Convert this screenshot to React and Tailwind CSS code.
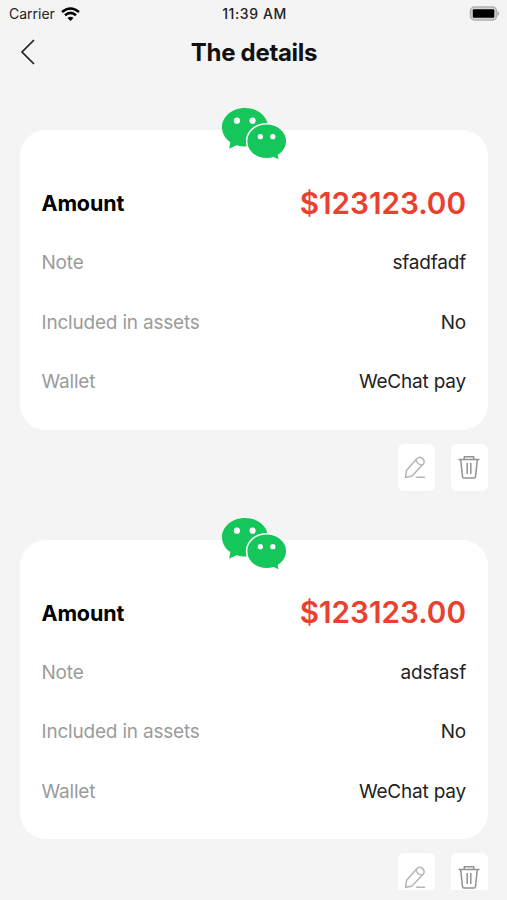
import React from 'react';

function WeChatLogo() {
  return (
    <svg className="absolute left-[200.500px] top-[-23px] h-[54px] w-[67px]" viewBox="0 0 67 54">
      <g fill="#15c75b">
        <path d="M24 1C11.300 1 1 9.500 1 20.200C1 26.200 4.200 31.500 9.300 35.100L8.200 41.700L15.500 38.200C18.200 39 21 39.400 24 39.400C36.700 39.400 47 30.900 47 20.200C47 9.500 36.700 1 24 1Z" />
        <path d="M45.700 16.800C34.300 16.800 25.600 24.600 25.600 34.300C25.600 44.200 34.500 51.700 45.700 51.700C48.200 51.700 50.500 51.400 52.700 50.700L58.600 53.600L57.400 48.300C62.500 45 65.800 40 65.800 34.300C65.800 24.600 57 16.800 45.700 16.800Z" stroke="#ffffff" strokeWidth="1.500" />
      </g>
      <g fill="#ffffff">
        <circle cx="15.900" cy="13.700" r="3.100" />
        <circle cx="31.600" cy="13.700" r="3.100" />
        <circle cx="39.300" cy="29.700" r="2.600" />
        <circle cx="51.800" cy="29.700" r="2.600" />
      </g>
    </svg>
  );
}

function PencilIcon() {
  return (
    <svg className="h-6 w-6" viewBox="0 0 24 24" fill="none" stroke="#b5b5b5" strokeWidth="1.500" strokeLinecap="round" strokeLinejoin="round">
      <path d="M1.500 22.500L2.500 15.500L13 3.500C14.500 2 16.500 1.900 18.300 3.300C20.400 5 20.800 7.200 19.300 9L8 21Z" />
      <path d="M12 4.700C12.500 7.500 15 10 18.300 10M12.500 22.300H20.500" />
    </svg>
  );
}

function TrashIcon() {
  return (
    <svg className="h-6 w-6" viewBox="0 0 24 24" fill="none" stroke="#929292" strokeWidth="1.500" strokeLinejoin="round">
      <path d="M1.500 4.500H22.500M7.300 4V1.700H16.700V4M3.700 5L5.500 21.700Q5.700 23.100 7 23.100H17Q18.300 23.100 18.500 21.700L20.300 5M10.200 8V19M13.800 8V19" />
    </svg>
  );
}

function Row({ label, value }) {
  return (
    <div className="flex h-[59.600px] items-center justify-between text-[19px] tracking-[-0.200px]">
      <span className="text-[#9b9b9b]">{label}</span>
      <span className="text-[#222]">{value}</span>
    </div>
  );
}

function Entry({ note }) {
  return (
    <section className="h-[409.500px]">
      <div className="relative h-[299.500px] rounded-[26px] bg-white px-[21.500px] pt-[43px]">
        <WeChatLogo />
        <div className="flex h-[60.500px] items-center justify-between">
          <span className="text-[21.500px] font-bold tracking-[-0.150px] text-black">Amount</span>
          <span className="text-[29.700px] font-semibold text-[#e9402f]">$123123.00</span>
        </div>
        <Row label="Note" value={note} />
        <Row label="Included in assets" value="No" />
        <Row label="Wallet" value="WeChat pay" />
      </div>
      <div className="mt-[14px] flex justify-end gap-4">
        <button className="flex h-[47px] w-[37px] items-center justify-center rounded-md bg-white">
          <PencilIcon />
        </button>
        <button className="flex h-[47px] w-[37px] items-center justify-center rounded-md bg-white">
          <TrashIcon />
        </button>
      </div>
    </section>
  );
}

export default function App() {
  return (
    <div className="h-[900px] overflow-hidden bg-[#f4f4f4] font-['Inter',sans-serif]">
      <header className="h-[90px]">
        <div className="grid h-[27px] grid-cols-3 items-center pl-[9px] pr-[6px] text-[14px] text-[#222]">
          <div className="flex items-center gap-[6px]">
            <span>Carrier</span>
            <svg className="h-[14px] w-[19px]" viewBox="0 0 19 14" fill="none" stroke="#000" strokeWidth="2.500">
              <path d="M1 5Q9.500 -2 18 5M4 8.300Q9.500 3.500 15 8.300" />
              <path d="M6.500 11Q9.500 8.500 12.500 11L9.500 14Z" fill="#000" stroke="none" />
            </svg>
          </div>
          <span className="pr-px text-center text-[14px] font-medium tracking-[0.600px]">11:39 AM</span>
          <svg className="h-[15px] w-[32px] justify-self-end" viewBox="0 0 32 15">
            <rect x="1.500" y="1" width="26" height="13" rx="4" fill="#d5d5d5" stroke="#b0b0b0" strokeWidth="1.500" />
            <rect x="3.800" y="3.300" width="21.500" height="8.500" rx="1" fill="#000" />
            <path d="M28.500 5Q32 7.500 28.500 10Z" fill="#aaa" />
          </svg>
        </div>
        <div className="grid h-[50px] grid-cols-3 items-center">
          <svg className="ml-[20px] h-[26px] w-4" viewBox="0 0 16 26" fill="none" stroke="#222" strokeWidth="1.700">
            <path d="M14 1L2 13L14 25" />
          </svg>
          <h1 className="whitespace-nowrap pl-px pt-px text-center text-[24px] font-bold tracking-[-0.300px] text-[#111]">The details</h1>
        </div>
      </header>
      <main className="h-[800px] overflow-hidden pl-[20px] pr-[19.500px] pt-10">
        <Entry note="sfadfadf" />
        <Entry note="adsfasf" />
      </main>
    </div>
  );
}
